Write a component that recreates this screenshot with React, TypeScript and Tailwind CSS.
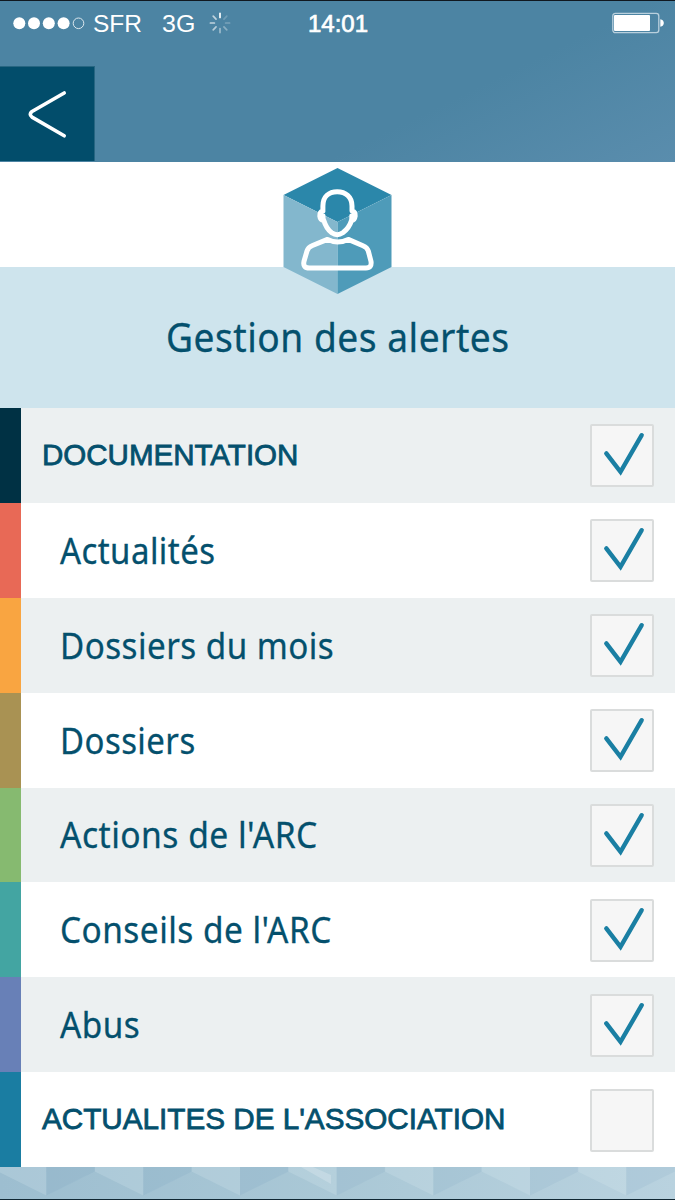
import React from "react";

type Row = { label: string; stripe: string; heading?: boolean; checked: boolean; stretch: string };

const rows: Row[] = [
  { label: "DOCUMENTATION", stripe: "bg-[#003144]", heading: true, checked: true, stretch: "scale-x-[0.984]" },
  { label: "Actualités", stripe: "bg-[#e86956]", checked: true, stretch: "scale-x-[0.915]" },
  { label: "Dossiers du mois", stripe: "bg-[#f9a541]", checked: true, stretch: "scale-x-[0.922]" },
  { label: "Dossiers", stripe: "bg-[#a99253]", checked: true, stretch: "scale-x-[0.915]" },
  { label: "Actions de l'ARC", stripe: "bg-[#86ba70]", checked: true, stretch: "scale-x-[0.934]" },
  { label: "Conseils de l'ARC", stripe: "bg-[#43a5a2]", checked: true, stretch: "scale-x-[0.928]" },
  { label: "Abus", stripe: "bg-[#6880b7]", checked: true, stretch: "scale-x-[0.925]" },
  { label: "ACTUALITES DE L'ASSOCIATION", stripe: "bg-[#1a7da2]", heading: true, checked: false, stretch: "scale-x-[0.989]" },
];

function StatusBar() {
  return (
    <div className="grid h-[44px] grid-cols-[308px_1fr_63px] items-center font-['Liberation_Sans',sans-serif] text-[24px] leading-none text-white">
      <div className="flex items-center">
        <svg className="ml-[13px] h-[14px] w-[73px]" viewBox="0 0 73 14">
          {[6.3, 21, 35.8, 50.6].map((x) => (
            <circle key={x} cx={x} cy="7.3" r="6" fill="#fff" />
          ))}
          <circle cx="65.5" cy="7.3" r="5.3" fill="none" stroke="#dce8ee" strokeWidth="1" />
        </svg>
        <span className="ml-[7px] w-[69px] origin-left scale-x-[1.02] pt-px">SFR</span>
        <span className="w-[47px] origin-left scale-x-[1.04] pt-px">3G</span>
        <svg className="h-[22px] w-[22px]" viewBox="-11 -11 22 22" strokeWidth="1.7" strokeLinecap="round" stroke="#fff">
          {[1, 0.2, 0.25, 0.35, 0.45, 0.6, 0.65, 0.65].map((o, i) => (
            <path key={i} d="M0 -5.6V-9.6" opacity={o} transform={`rotate(${i * 45})`} />
          ))}
        </svg>
      </div>
      <span className="pt-px [-webkit-text-stroke:0.7px_white]">14:01</span>
      <svg className="h-[22px] w-[54px]" viewBox="0 0 54 22">
        <rect x="0.8" y="1.3" width="46" height="19.4" rx="2.6" fill="none" stroke="#b9d0dd" strokeWidth="1.3" />
        <rect x="2" y="3" width="36" height="16" rx="1" fill="#fff" />
        <path d="M48.3 7.2Q51.8 8 51.8 11T48.3 14.8Z" fill="#fff" />
      </svg>
    </div>
  );
}

function ProfileBadge() {
  return (
    <svg className="absolute left-[283px] top-[6px] h-[127px] w-[109px]" viewBox="283 168 109 127">
      <path d="M337.5 168L391.5 195L337.5 222L283.5 195Z" fill="#2b87aa" />
      <path d="M283.5 195L337.5 222V294L283.5 267Z" fill="#83b7cd" />
      <path d="M391.5 195L337.5 222V294L391.5 267Z" fill="#4e9bb9" />
      <g fill="none" stroke="#fff" strokeWidth="5" strokeLinejoin="round" strokeLinecap="round">
        <path d="M322.9 211V206C322.9 196.5 329 191.7 337.2 191.7S352 196.5 352 206V211Q355.6 212 355.2 216Q354.6 220.5 351.5 220.5C349.5 227 346.5 230 342.8 232.8Q337.2 236.6 331.7 232.8C328 230 325.5 226 323.8 220.5Q320.2 220 319.8 216Q319.5 212 322.9 211" />
        <path d="M320.5 215.5H323.5V219M354.5 215.5H351.3V219" strokeWidth="4" />
        <path d="M327.5 239.4Q337.5 244.6 348.2 239.4L363 245.7Q367.2 247.5 368.3 251L371 261.3Q372 268 366 268H309.5Q302.5 268 304 261.3L307 251Q308.2 247.2 312.5 245.5Z" />
      </g>
    </svg>
  );
}

function Checkbox({ checked }: { checked: boolean }) {
  return (
    <div className="mr-[21px] mt-px h-[63px] w-[64px] rounded-[2px] border-2 border-[#dadcdc] bg-[#f6f6f6]" role="checkbox" aria-checked={checked}>
      {checked && (
        <svg className="h-[59px] w-[60px]" viewBox="0 0 60 59" fill="none" stroke="#1a7fa3" strokeWidth="4.4" strokeLinecap="round" strokeLinejoin="miter">
          <path d="M14.3 27.4L28.5 45.9L49.7 9.2" />
        </svg>
      )}
    </div>
  );
}

function Footer() {
  return (
    <svg className="block h-[33px] w-[675px]" viewBox="0 0 675 33">
      <defs>
        <linearGradient id="base" x1="0" x2="1">
          <stop offset="0" stopColor="#9dbed0" />
          <stop offset="0.5" stopColor="#aac8d6" />
          <stop offset="1" stopColor="#b9d2df" />
        </linearGradient>
      </defs>
      <rect width="675" height="33" fill="url(#base)" />
      {[46.3, 143.3, 240, 336.7, 433.3, 530, 626.3].map((x, i) => (
        <g key={x}>
          <path d={`M${x} 0V28.5L${x - 48.5} 4.5V0Z`} fill="#e3eff3" opacity="0.2" />
          <path d={`M${x} 0V28.5L${x + 48.5} 4.5V0Z`} fill="#749fbd" opacity={i < 3 ? 0.17 : 0.12} />
        </g>
      ))}
      <path d="M301 0H313L331 8V17Z" fill="#fff" opacity="0.2" />
      <rect y="32" width="675" height="1" fill="#102733" />
    </svg>
  );
}

export default function App() {
  return (
    <main className="flex h-[1200px] w-[675px] flex-col overflow-hidden bg-white text-[#04506d]">
      <header className="flex h-[162px] flex-col border-t border-[#101820] bg-[linear-gradient(154deg,#4c84a3_0%,#4c84a3_65%,#5a8dad_100%)]">
        <StatusBar />
        <button aria-label="Retour" className="mt-[21px] flex h-[95px] w-[95px] border-r border-t border-[#276682] bg-[#024d6b]">
          <svg className="h-[94px] w-[94px]" viewBox="0 0 94 94" fill="none" stroke="#fff" strokeWidth="3.6" strokeLinecap="round" strokeLinejoin="round">
            <path d="M64.2 26L32 44.5Q28.5 47.3 32 50.1L64.2 68.8" />
          </svg>
        </button>
      </header>
      <section className="relative h-[246px] pt-[105px]">
        <div className="flex h-[141px] justify-center bg-[#cee4ed] pt-[43px]">
          <h1 className="origin-center scale-x-[0.94] whitespace-nowrap font-['Noto_Sans',sans-serif] text-[39.5px] leading-[54px] tracking-[0.55px] [-webkit-text-stroke:0.3px_#04506d]">
            Gestion des alertes
          </h1>
        </div>
        <ProfileBadge />
      </section>
      <section className="grid h-[759px] grid-rows-8">
        {rows.map((row, i) => (
          <div key={row.label} className={`flex items-center ${i % 2 === 0 ? "bg-[#ecf0f1]" : "bg-white"}`}>
            <div className={`w-[21px] self-stretch ${row.stripe}`} />
            <div
              className={`grow ${
                row.heading
                  ? "pb-[2px] pl-[21px] font-['Liberation_Sans',sans-serif] text-[30px] [-webkit-text-stroke:0.8px_#04506d]"
                  : "pl-[39px] pt-px font-['Noto_Sans',sans-serif] text-[36px] tracking-[0.5px] [-webkit-text-stroke:0.3px_#04506d]"
              }`}
            >
              <span className={`inline-block origin-left whitespace-nowrap ${row.stretch}`}>{row.label}</span>
            </div>
            <Checkbox checked={row.checked} />
          </div>
        ))}
      </section>
      <Footer />
    </main>
  );
}
